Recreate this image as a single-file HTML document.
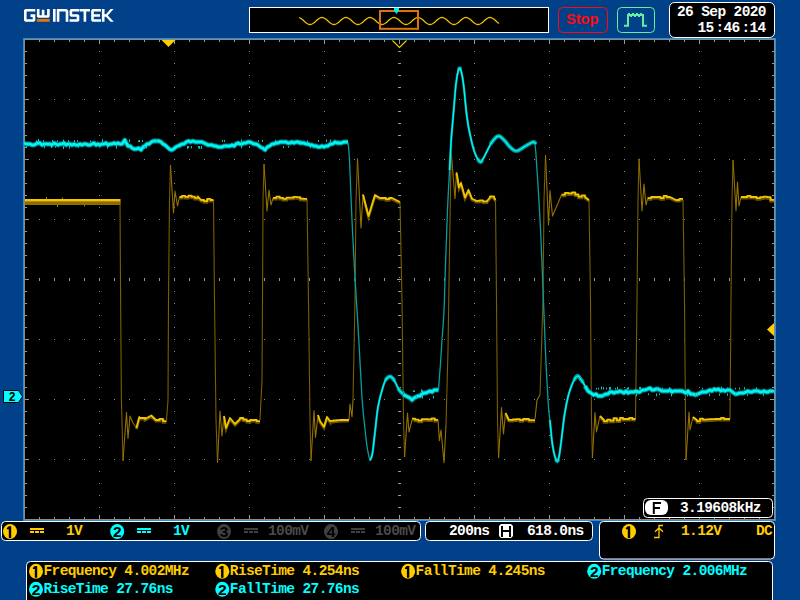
<!DOCTYPE html><html><head><meta charset="utf-8"><style>html,body{margin:0;padding:0;background:#01418a;width:800px;height:600px;overflow:hidden}svg{display:block}text{font-family:"Liberation Mono",monospace;font-weight:bold}</style></head><body>
<svg width="800" height="600" viewBox="0 0 800 600">
<rect width="800" height="600" fill="#01418a"/>
<rect x="23" y="38" width="753" height="483" fill="#2e8fd0"/>
<rect x="24" y="39" width="751" height="481" fill="#8a8a8a"/>
<rect x="25" y="40" width="749" height="479" fill="#000"/>
<path d="M99 51h1v1h-1zM99 63h1v1h-1zM99 75h1v1h-1zM99 87h1v1h-1zM99 99h1v1h-1zM99 111h1v1h-1zM99 123h1v1h-1zM99 135h1v1h-1zM99 147h1v1h-1zM99 159h1v1h-1zM99 171h1v1h-1zM99 183h1v1h-1zM99 195h1v1h-1zM99 207h1v1h-1zM99 219h1v1h-1zM99 231h1v1h-1zM99 243h1v1h-1zM99 255h1v1h-1zM99 267h1v1h-1zM99 279h1v1h-1zM99 291h1v1h-1zM99 303h1v1h-1zM99 315h1v1h-1zM99 327h1v1h-1zM99 339h1v1h-1zM99 351h1v1h-1zM99 363h1v1h-1zM99 375h1v1h-1zM99 387h1v1h-1zM99 399h1v1h-1zM99 411h1v1h-1zM99 423h1v1h-1zM99 435h1v1h-1zM99 447h1v1h-1zM99 459h1v1h-1zM99 471h1v1h-1zM99 483h1v1h-1zM99 495h1v1h-1zM99 507h1v1h-1zM174 51h1v1h-1zM174 63h1v1h-1zM174 75h1v1h-1zM174 87h1v1h-1zM174 99h1v1h-1zM174 111h1v1h-1zM174 123h1v1h-1zM174 135h1v1h-1zM174 147h1v1h-1zM174 159h1v1h-1zM174 171h1v1h-1zM174 183h1v1h-1zM174 195h1v1h-1zM174 207h1v1h-1zM174 219h1v1h-1zM174 231h1v1h-1zM174 243h1v1h-1zM174 255h1v1h-1zM174 267h1v1h-1zM174 279h1v1h-1zM174 291h1v1h-1zM174 303h1v1h-1zM174 315h1v1h-1zM174 327h1v1h-1zM174 339h1v1h-1zM174 351h1v1h-1zM174 363h1v1h-1zM174 375h1v1h-1zM174 387h1v1h-1zM174 399h1v1h-1zM174 411h1v1h-1zM174 423h1v1h-1zM174 435h1v1h-1zM174 447h1v1h-1zM174 459h1v1h-1zM174 471h1v1h-1zM174 483h1v1h-1zM174 495h1v1h-1zM174 507h1v1h-1zM249 51h1v1h-1zM249 63h1v1h-1zM249 75h1v1h-1zM249 87h1v1h-1zM249 99h1v1h-1zM249 111h1v1h-1zM249 123h1v1h-1zM249 135h1v1h-1zM249 147h1v1h-1zM249 159h1v1h-1zM249 171h1v1h-1zM249 183h1v1h-1zM249 195h1v1h-1zM249 207h1v1h-1zM249 219h1v1h-1zM249 231h1v1h-1zM249 243h1v1h-1zM249 255h1v1h-1zM249 267h1v1h-1zM249 279h1v1h-1zM249 291h1v1h-1zM249 303h1v1h-1zM249 315h1v1h-1zM249 327h1v1h-1zM249 339h1v1h-1zM249 351h1v1h-1zM249 363h1v1h-1zM249 375h1v1h-1zM249 387h1v1h-1zM249 399h1v1h-1zM249 411h1v1h-1zM249 423h1v1h-1zM249 435h1v1h-1zM249 447h1v1h-1zM249 459h1v1h-1zM249 471h1v1h-1zM249 483h1v1h-1zM249 495h1v1h-1zM249 507h1v1h-1zM324 51h1v1h-1zM324 63h1v1h-1zM324 75h1v1h-1zM324 87h1v1h-1zM324 99h1v1h-1zM324 111h1v1h-1zM324 123h1v1h-1zM324 135h1v1h-1zM324 147h1v1h-1zM324 159h1v1h-1zM324 171h1v1h-1zM324 183h1v1h-1zM324 195h1v1h-1zM324 207h1v1h-1zM324 219h1v1h-1zM324 231h1v1h-1zM324 243h1v1h-1zM324 255h1v1h-1zM324 267h1v1h-1zM324 279h1v1h-1zM324 291h1v1h-1zM324 303h1v1h-1zM324 315h1v1h-1zM324 327h1v1h-1zM324 339h1v1h-1zM324 351h1v1h-1zM324 363h1v1h-1zM324 375h1v1h-1zM324 387h1v1h-1zM324 399h1v1h-1zM324 411h1v1h-1zM324 423h1v1h-1zM324 435h1v1h-1zM324 447h1v1h-1zM324 459h1v1h-1zM324 471h1v1h-1zM324 483h1v1h-1zM324 495h1v1h-1zM324 507h1v1h-1zM474 51h1v1h-1zM474 63h1v1h-1zM474 75h1v1h-1zM474 87h1v1h-1zM474 99h1v1h-1zM474 111h1v1h-1zM474 123h1v1h-1zM474 135h1v1h-1zM474 147h1v1h-1zM474 159h1v1h-1zM474 171h1v1h-1zM474 183h1v1h-1zM474 195h1v1h-1zM474 207h1v1h-1zM474 219h1v1h-1zM474 231h1v1h-1zM474 243h1v1h-1zM474 255h1v1h-1zM474 267h1v1h-1zM474 279h1v1h-1zM474 291h1v1h-1zM474 303h1v1h-1zM474 315h1v1h-1zM474 327h1v1h-1zM474 339h1v1h-1zM474 351h1v1h-1zM474 363h1v1h-1zM474 375h1v1h-1zM474 387h1v1h-1zM474 399h1v1h-1zM474 411h1v1h-1zM474 423h1v1h-1zM474 435h1v1h-1zM474 447h1v1h-1zM474 459h1v1h-1zM474 471h1v1h-1zM474 483h1v1h-1zM474 495h1v1h-1zM474 507h1v1h-1zM549 51h1v1h-1zM549 63h1v1h-1zM549 75h1v1h-1zM549 87h1v1h-1zM549 99h1v1h-1zM549 111h1v1h-1zM549 123h1v1h-1zM549 135h1v1h-1zM549 147h1v1h-1zM549 159h1v1h-1zM549 171h1v1h-1zM549 183h1v1h-1zM549 195h1v1h-1zM549 207h1v1h-1zM549 219h1v1h-1zM549 231h1v1h-1zM549 243h1v1h-1zM549 255h1v1h-1zM549 267h1v1h-1zM549 279h1v1h-1zM549 291h1v1h-1zM549 303h1v1h-1zM549 315h1v1h-1zM549 327h1v1h-1zM549 339h1v1h-1zM549 351h1v1h-1zM549 363h1v1h-1zM549 375h1v1h-1zM549 387h1v1h-1zM549 399h1v1h-1zM549 411h1v1h-1zM549 423h1v1h-1zM549 435h1v1h-1zM549 447h1v1h-1zM549 459h1v1h-1zM549 471h1v1h-1zM549 483h1v1h-1zM549 495h1v1h-1zM549 507h1v1h-1zM624 51h1v1h-1zM624 63h1v1h-1zM624 75h1v1h-1zM624 87h1v1h-1zM624 99h1v1h-1zM624 111h1v1h-1zM624 123h1v1h-1zM624 135h1v1h-1zM624 147h1v1h-1zM624 159h1v1h-1zM624 171h1v1h-1zM624 183h1v1h-1zM624 195h1v1h-1zM624 207h1v1h-1zM624 219h1v1h-1zM624 231h1v1h-1zM624 243h1v1h-1zM624 255h1v1h-1zM624 267h1v1h-1zM624 279h1v1h-1zM624 291h1v1h-1zM624 303h1v1h-1zM624 315h1v1h-1zM624 327h1v1h-1zM624 339h1v1h-1zM624 351h1v1h-1zM624 363h1v1h-1zM624 375h1v1h-1zM624 387h1v1h-1zM624 399h1v1h-1zM624 411h1v1h-1zM624 423h1v1h-1zM624 435h1v1h-1zM624 447h1v1h-1zM624 459h1v1h-1zM624 471h1v1h-1zM624 483h1v1h-1zM624 495h1v1h-1zM624 507h1v1h-1zM699 51h1v1h-1zM699 63h1v1h-1zM699 75h1v1h-1zM699 87h1v1h-1zM699 99h1v1h-1zM699 111h1v1h-1zM699 123h1v1h-1zM699 135h1v1h-1zM699 147h1v1h-1zM699 159h1v1h-1zM699 171h1v1h-1zM699 183h1v1h-1zM699 195h1v1h-1zM699 207h1v1h-1zM699 219h1v1h-1zM699 231h1v1h-1zM699 243h1v1h-1zM699 255h1v1h-1zM699 267h1v1h-1zM699 279h1v1h-1zM699 291h1v1h-1zM699 303h1v1h-1zM699 315h1v1h-1zM699 327h1v1h-1zM699 339h1v1h-1zM699 351h1v1h-1zM699 363h1v1h-1zM699 375h1v1h-1zM699 387h1v1h-1zM699 399h1v1h-1zM699 411h1v1h-1zM699 423h1v1h-1zM699 435h1v1h-1zM699 447h1v1h-1zM699 459h1v1h-1zM699 471h1v1h-1zM699 483h1v1h-1zM699 495h1v1h-1zM699 507h1v1h-1zM39 99h1v1h-1zM54 99h1v1h-1zM69 99h1v1h-1zM84 99h1v1h-1zM114 99h1v1h-1zM129 99h1v1h-1zM144 99h1v1h-1zM159 99h1v1h-1zM189 99h1v1h-1zM204 99h1v1h-1zM219 99h1v1h-1zM234 99h1v1h-1zM264 99h1v1h-1zM279 99h1v1h-1zM294 99h1v1h-1zM309 99h1v1h-1zM339 99h1v1h-1zM354 99h1v1h-1zM369 99h1v1h-1zM384 99h1v1h-1zM414 99h1v1h-1zM429 99h1v1h-1zM444 99h1v1h-1zM459 99h1v1h-1zM489 99h1v1h-1zM504 99h1v1h-1zM519 99h1v1h-1zM534 99h1v1h-1zM564 99h1v1h-1zM579 99h1v1h-1zM594 99h1v1h-1zM609 99h1v1h-1zM639 99h1v1h-1zM654 99h1v1h-1zM669 99h1v1h-1zM684 99h1v1h-1zM714 99h1v1h-1zM729 99h1v1h-1zM744 99h1v1h-1zM759 99h1v1h-1zM39 159h1v1h-1zM54 159h1v1h-1zM69 159h1v1h-1zM84 159h1v1h-1zM114 159h1v1h-1zM129 159h1v1h-1zM144 159h1v1h-1zM159 159h1v1h-1zM189 159h1v1h-1zM204 159h1v1h-1zM219 159h1v1h-1zM234 159h1v1h-1zM264 159h1v1h-1zM279 159h1v1h-1zM294 159h1v1h-1zM309 159h1v1h-1zM339 159h1v1h-1zM354 159h1v1h-1zM369 159h1v1h-1zM384 159h1v1h-1zM414 159h1v1h-1zM429 159h1v1h-1zM444 159h1v1h-1zM459 159h1v1h-1zM489 159h1v1h-1zM504 159h1v1h-1zM519 159h1v1h-1zM534 159h1v1h-1zM564 159h1v1h-1zM579 159h1v1h-1zM594 159h1v1h-1zM609 159h1v1h-1zM639 159h1v1h-1zM654 159h1v1h-1zM669 159h1v1h-1zM684 159h1v1h-1zM714 159h1v1h-1zM729 159h1v1h-1zM744 159h1v1h-1zM759 159h1v1h-1zM39 219h1v1h-1zM54 219h1v1h-1zM69 219h1v1h-1zM84 219h1v1h-1zM114 219h1v1h-1zM129 219h1v1h-1zM144 219h1v1h-1zM159 219h1v1h-1zM189 219h1v1h-1zM204 219h1v1h-1zM219 219h1v1h-1zM234 219h1v1h-1zM264 219h1v1h-1zM279 219h1v1h-1zM294 219h1v1h-1zM309 219h1v1h-1zM339 219h1v1h-1zM354 219h1v1h-1zM369 219h1v1h-1zM384 219h1v1h-1zM414 219h1v1h-1zM429 219h1v1h-1zM444 219h1v1h-1zM459 219h1v1h-1zM489 219h1v1h-1zM504 219h1v1h-1zM519 219h1v1h-1zM534 219h1v1h-1zM564 219h1v1h-1zM579 219h1v1h-1zM594 219h1v1h-1zM609 219h1v1h-1zM639 219h1v1h-1zM654 219h1v1h-1zM669 219h1v1h-1zM684 219h1v1h-1zM714 219h1v1h-1zM729 219h1v1h-1zM744 219h1v1h-1zM759 219h1v1h-1zM39 339h1v1h-1zM54 339h1v1h-1zM69 339h1v1h-1zM84 339h1v1h-1zM114 339h1v1h-1zM129 339h1v1h-1zM144 339h1v1h-1zM159 339h1v1h-1zM189 339h1v1h-1zM204 339h1v1h-1zM219 339h1v1h-1zM234 339h1v1h-1zM264 339h1v1h-1zM279 339h1v1h-1zM294 339h1v1h-1zM309 339h1v1h-1zM339 339h1v1h-1zM354 339h1v1h-1zM369 339h1v1h-1zM384 339h1v1h-1zM414 339h1v1h-1zM429 339h1v1h-1zM444 339h1v1h-1zM459 339h1v1h-1zM489 339h1v1h-1zM504 339h1v1h-1zM519 339h1v1h-1zM534 339h1v1h-1zM564 339h1v1h-1zM579 339h1v1h-1zM594 339h1v1h-1zM609 339h1v1h-1zM639 339h1v1h-1zM654 339h1v1h-1zM669 339h1v1h-1zM684 339h1v1h-1zM714 339h1v1h-1zM729 339h1v1h-1zM744 339h1v1h-1zM759 339h1v1h-1zM39 399h1v1h-1zM54 399h1v1h-1zM69 399h1v1h-1zM84 399h1v1h-1zM114 399h1v1h-1zM129 399h1v1h-1zM144 399h1v1h-1zM159 399h1v1h-1zM189 399h1v1h-1zM204 399h1v1h-1zM219 399h1v1h-1zM234 399h1v1h-1zM264 399h1v1h-1zM279 399h1v1h-1zM294 399h1v1h-1zM309 399h1v1h-1zM339 399h1v1h-1zM354 399h1v1h-1zM369 399h1v1h-1zM384 399h1v1h-1zM414 399h1v1h-1zM429 399h1v1h-1zM444 399h1v1h-1zM459 399h1v1h-1zM489 399h1v1h-1zM504 399h1v1h-1zM519 399h1v1h-1zM534 399h1v1h-1zM564 399h1v1h-1zM579 399h1v1h-1zM594 399h1v1h-1zM609 399h1v1h-1zM639 399h1v1h-1zM654 399h1v1h-1zM669 399h1v1h-1zM684 399h1v1h-1zM714 399h1v1h-1zM729 399h1v1h-1zM744 399h1v1h-1zM759 399h1v1h-1zM39 459h1v1h-1zM54 459h1v1h-1zM69 459h1v1h-1zM84 459h1v1h-1zM114 459h1v1h-1zM129 459h1v1h-1zM144 459h1v1h-1zM159 459h1v1h-1zM189 459h1v1h-1zM204 459h1v1h-1zM219 459h1v1h-1zM234 459h1v1h-1zM264 459h1v1h-1zM279 459h1v1h-1zM294 459h1v1h-1zM309 459h1v1h-1zM339 459h1v1h-1zM354 459h1v1h-1zM369 459h1v1h-1zM384 459h1v1h-1zM414 459h1v1h-1zM429 459h1v1h-1zM444 459h1v1h-1zM459 459h1v1h-1zM489 459h1v1h-1zM504 459h1v1h-1zM519 459h1v1h-1zM534 459h1v1h-1zM564 459h1v1h-1zM579 459h1v1h-1zM594 459h1v1h-1zM609 459h1v1h-1zM639 459h1v1h-1zM654 459h1v1h-1zM669 459h1v1h-1zM684 459h1v1h-1zM714 459h1v1h-1zM729 459h1v1h-1zM744 459h1v1h-1zM759 459h1v1h-1z" fill="#8c8c8c"/>
<path d="M398 51h3v1h-3zM398 63h3v1h-3zM398 75h3v1h-3zM398 87h3v1h-3zM398 99h3v1h-3zM398 111h3v1h-3zM398 123h3v1h-3zM398 135h3v1h-3zM398 147h3v1h-3zM398 159h3v1h-3zM398 171h3v1h-3zM398 183h3v1h-3zM398 195h3v1h-3zM398 207h3v1h-3zM398 219h3v1h-3zM398 231h3v1h-3zM398 243h3v1h-3zM398 255h3v1h-3zM398 267h3v1h-3zM398 279h3v1h-3zM398 291h3v1h-3zM398 303h3v1h-3zM398 315h3v1h-3zM398 327h3v1h-3zM398 339h3v1h-3zM398 351h3v1h-3zM398 363h3v1h-3zM398 375h3v1h-3zM398 387h3v1h-3zM398 399h3v1h-3zM398 411h3v1h-3zM398 423h3v1h-3zM398 435h3v1h-3zM398 447h3v1h-3zM398 459h3v1h-3zM398 471h3v1h-3zM398 483h3v1h-3zM398 495h3v1h-3zM398 507h3v1h-3zM39 278v3h1v-3zM54 278v3h1v-3zM69 278v3h1v-3zM84 278v3h1v-3zM99 278v3h1v-3zM114 278v3h1v-3zM129 278v3h1v-3zM144 278v3h1v-3zM159 278v3h1v-3zM174 278v3h1v-3zM189 278v3h1v-3zM204 278v3h1v-3zM219 278v3h1v-3zM234 278v3h1v-3zM249 278v3h1v-3zM264 278v3h1v-3zM279 278v3h1v-3zM294 278v3h1v-3zM309 278v3h1v-3zM324 278v3h1v-3zM339 278v3h1v-3zM354 278v3h1v-3zM369 278v3h1v-3zM384 278v3h1v-3zM399 278v3h1v-3zM414 278v3h1v-3zM429 278v3h1v-3zM444 278v3h1v-3zM459 278v3h1v-3zM474 278v3h1v-3zM489 278v3h1v-3zM504 278v3h1v-3zM519 278v3h1v-3zM534 278v3h1v-3zM549 278v3h1v-3zM564 278v3h1v-3zM579 278v3h1v-3zM594 278v3h1v-3zM609 278v3h1v-3zM624 278v3h1v-3zM639 278v3h1v-3zM654 278v3h1v-3zM669 278v3h1v-3zM684 278v3h1v-3zM699 278v3h1v-3zM714 278v3h1v-3zM729 278v3h1v-3zM744 278v3h1v-3zM759 278v3h1v-3zM39 40h1v2h-1zM39 517h1v2h-1zM54 40h1v2h-1zM54 517h1v2h-1zM69 40h1v2h-1zM69 517h1v2h-1zM84 40h1v2h-1zM84 517h1v2h-1zM99 40h1v4h-1zM99 515h1v4h-1zM114 40h1v2h-1zM114 517h1v2h-1zM129 40h1v2h-1zM129 517h1v2h-1zM144 40h1v2h-1zM144 517h1v2h-1zM159 40h1v2h-1zM159 517h1v2h-1zM174 40h1v4h-1zM174 515h1v4h-1zM189 40h1v2h-1zM189 517h1v2h-1zM204 40h1v2h-1zM204 517h1v2h-1zM219 40h1v2h-1zM219 517h1v2h-1zM234 40h1v2h-1zM234 517h1v2h-1zM249 40h1v4h-1zM249 515h1v4h-1zM264 40h1v2h-1zM264 517h1v2h-1zM279 40h1v2h-1zM279 517h1v2h-1zM294 40h1v2h-1zM294 517h1v2h-1zM309 40h1v2h-1zM309 517h1v2h-1zM324 40h1v4h-1zM324 515h1v4h-1zM339 40h1v2h-1zM339 517h1v2h-1zM354 40h1v2h-1zM354 517h1v2h-1zM369 40h1v2h-1zM369 517h1v2h-1zM384 40h1v2h-1zM384 517h1v2h-1zM399 40h1v4h-1zM399 515h1v4h-1zM414 40h1v2h-1zM414 517h1v2h-1zM429 40h1v2h-1zM429 517h1v2h-1zM444 40h1v2h-1zM444 517h1v2h-1zM459 40h1v2h-1zM459 517h1v2h-1zM474 40h1v4h-1zM474 515h1v4h-1zM489 40h1v2h-1zM489 517h1v2h-1zM504 40h1v2h-1zM504 517h1v2h-1zM519 40h1v2h-1zM519 517h1v2h-1zM534 40h1v2h-1zM534 517h1v2h-1zM549 40h1v4h-1zM549 515h1v4h-1zM564 40h1v2h-1zM564 517h1v2h-1zM579 40h1v2h-1zM579 517h1v2h-1zM594 40h1v2h-1zM594 517h1v2h-1zM609 40h1v2h-1zM609 517h1v2h-1zM624 40h1v4h-1zM624 515h1v4h-1zM639 40h1v2h-1zM639 517h1v2h-1zM654 40h1v2h-1zM654 517h1v2h-1zM669 40h1v2h-1zM669 517h1v2h-1zM684 40h1v2h-1zM684 517h1v2h-1zM699 40h1v4h-1zM699 515h1v4h-1zM714 40h1v2h-1zM714 517h1v2h-1zM729 40h1v2h-1zM729 517h1v2h-1zM744 40h1v2h-1zM744 517h1v2h-1zM759 40h1v2h-1zM759 517h1v2h-1zM25 51h2v1h-2zM772 51h2v1h-2zM25 63h2v1h-2zM772 63h2v1h-2zM25 75h2v1h-2zM772 75h2v1h-2zM25 87h2v1h-2zM772 87h2v1h-2zM25 99h4v1h-4zM770 99h4v1h-4zM25 111h2v1h-2zM772 111h2v1h-2zM25 123h2v1h-2zM772 123h2v1h-2zM25 135h2v1h-2zM772 135h2v1h-2zM25 147h2v1h-2zM772 147h2v1h-2zM25 159h4v1h-4zM770 159h4v1h-4zM25 171h2v1h-2zM772 171h2v1h-2zM25 183h2v1h-2zM772 183h2v1h-2zM25 195h2v1h-2zM772 195h2v1h-2zM25 207h2v1h-2zM772 207h2v1h-2zM25 219h4v1h-4zM770 219h4v1h-4zM25 231h2v1h-2zM772 231h2v1h-2zM25 243h2v1h-2zM772 243h2v1h-2zM25 255h2v1h-2zM772 255h2v1h-2zM25 267h2v1h-2zM772 267h2v1h-2zM25 279h4v1h-4zM770 279h4v1h-4zM25 291h2v1h-2zM772 291h2v1h-2zM25 303h2v1h-2zM772 303h2v1h-2zM25 315h2v1h-2zM772 315h2v1h-2zM25 327h2v1h-2zM772 327h2v1h-2zM25 339h4v1h-4zM770 339h4v1h-4zM25 351h2v1h-2zM772 351h2v1h-2zM25 363h2v1h-2zM772 363h2v1h-2zM25 375h2v1h-2zM772 375h2v1h-2zM25 387h2v1h-2zM772 387h2v1h-2zM25 399h4v1h-4zM770 399h4v1h-4zM25 411h2v1h-2zM772 411h2v1h-2zM25 423h2v1h-2zM772 423h2v1h-2zM25 435h2v1h-2zM772 435h2v1h-2zM25 447h2v1h-2zM772 447h2v1h-2zM25 459h4v1h-4zM770 459h4v1h-4zM25 471h2v1h-2zM772 471h2v1h-2zM25 483h2v1h-2zM772 483h2v1h-2zM25 495h2v1h-2zM772 495h2v1h-2zM25 507h2v1h-2zM772 507h2v1h-2zM397 279h5v1h-5z M399 277h1v5h-1z" fill="#9a9a9a"/>
<polyline points="120.0,201.5 120.6,300.0 121.4,400.0 123.0,461.0" stroke="#7a5e00" stroke-width="1.1" fill="none"/>
<polyline points="123.0,461.0 126.5,412.5 128.0,438.5 130.0,416.0 133.0,423.0 136.5,428.0" stroke="#947200" stroke-width="1.1" fill="none" stroke-linejoin="round"/>
<polyline points="166.5,420.0 168.0,400.0 168.5,300.0 169.5,200.0 170.5,165.0" stroke="#7a5e00" stroke-width="1.1" fill="none"/>
<polyline points="170.5,165.0 173.5,213.0 175.0,191.0 177.5,206.0 179.5,197.0" stroke="#947200" stroke-width="1.1" fill="none" stroke-linejoin="round"/>
<polyline points="213.5,200.0 214.5,300.0 216.0,420.0 217.5,462.5" stroke="#7a5e00" stroke-width="1.1" fill="none"/>
<polyline points="217.5,462.5 220.0,411.0 222.0,436.0 224.0,416.0" stroke="#947200" stroke-width="1.1" fill="none" stroke-linejoin="round"/>
<polyline points="260.0,420.0 262.0,380.0 262.5,300.0 263.0,200.0 264.0,164.0" stroke="#7a5e00" stroke-width="1.1" fill="none"/>
<polyline points="264.0,164.0 267.0,211.0 269.0,190.0 271.0,205.0 273.0,198.0" stroke="#947200" stroke-width="1.1" fill="none" stroke-linejoin="round"/>
<polyline points="307.0,199.0 308.5,300.0 310.0,420.0 311.0,460.8" stroke="#7a5e00" stroke-width="1.1" fill="none"/>
<polyline points="311.0,460.8 314.0,410.8 315.5,437.5 318.0,415.0" stroke="#947200" stroke-width="1.1" fill="none" stroke-linejoin="round"/>
<polyline points="349.0,420.0 350.0,404.0 352.0,417.0 353.0,400.0" stroke="#947200" stroke-width="1.1" fill="none" stroke-linejoin="round"/>
<polyline points="353.0,400.0 355.0,300.0 356.0,200.0 357.5,158.5" stroke="#7a5e00" stroke-width="1.1" fill="none"/>
<polyline points="357.5,158.5 361.0,228.0 363.0,194.5" stroke="#947200" stroke-width="1.1" fill="none" stroke-linejoin="round"/>
<polyline points="400.0,202.0 402.0,300.0 403.5,420.0 404.6,457.0" stroke="#7a5e00" stroke-width="1.1" fill="none"/>
<polyline points="404.6,457.0 407.5,413.0 409.0,432.0 412.0,420.0" stroke="#947200" stroke-width="1.1" fill="none" stroke-linejoin="round"/>
<polyline points="438.0,420.0 439.4,440.6 441.0,430.0 444.0,462.6 446.0,425.0" stroke="#947200" stroke-width="1.1" fill="none" stroke-linejoin="round"/>
<polyline points="446.0,425.0 448.0,350.0 449.5,250.0 451.2,152.0" stroke="#7a5e00" stroke-width="1.1" fill="none"/>
<polyline points="451.2,152.0 455.0,198.8 456.5,172.5" stroke="#947200" stroke-width="1.1" fill="none" stroke-linejoin="round"/>
<polyline points="495.5,200.0 496.5,300.0 497.5,420.0 498.6,458.0" stroke="#7a5e00" stroke-width="1.1" fill="none"/>
<polyline points="498.6,458.0 501.5,407.6 503.5,434.0 505.5,413.0" stroke="#947200" stroke-width="1.1" fill="none" stroke-linejoin="round"/>
<polyline points="535.0,419.0 537.0,400.0 540.0,395.0" stroke="#947200" stroke-width="1.1" fill="none" stroke-linejoin="round"/>
<polyline points="540.0,395.0 543.0,300.0 544.0,200.0 545.5,155.0" stroke="#7a5e00" stroke-width="1.1" fill="none"/>
<polyline points="545.5,155.0 548.5,225.0 550.0,190.6 552.5,216.0 561.5,195.0" stroke="#947200" stroke-width="1.1" fill="none" stroke-linejoin="round"/>
<polyline points="589.0,200.0 590.5,300.0 591.5,420.0 592.4,458.0" stroke="#7a5e00" stroke-width="1.1" fill="none"/>
<polyline points="592.4,458.0 595.0,412.6 596.5,432.0 600.0,416.0" stroke="#947200" stroke-width="1.1" fill="none" stroke-linejoin="round"/>
<polyline points="635.5,419.0 637.0,300.0 638.0,200.0 639.0,158.8" stroke="#7a5e00" stroke-width="1.1" fill="none"/>
<polyline points="639.0,158.8 642.0,211.0 644.0,184.0 646.0,205.0 648.0,197.0" stroke="#947200" stroke-width="1.1" fill="none" stroke-linejoin="round"/>
<polyline points="683.0,200.0 684.5,300.0 685.5,420.0 686.0,460.0" stroke="#7a5e00" stroke-width="1.1" fill="none"/>
<polyline points="686.0,460.0 689.0,412.0 690.0,430.0 693.0,417.0" stroke="#947200" stroke-width="1.1" fill="none" stroke-linejoin="round"/>
<polyline points="730.0,419.0 731.0,300.0 732.0,200.0 733.0,160.0" stroke="#7a5e00" stroke-width="1.1" fill="none"/>
<polyline points="733.0,160.0 736.0,210.6 737.5,182.0 739.0,206.0 741.0,197.0" stroke="#947200" stroke-width="1.1" fill="none" stroke-linejoin="round"/>
<polyline points="136.5,429.3 139.3,418.3 139.3,419.3 145.0,419.3 145.0,420.3 151.3,416.8 151.3,416.8 156.0,421.3 156.0,421.3 159.5,421.3 159.5,420.1 163.0,420.1 163.0,422.5 166.5,422.5" stroke="#6a5400" stroke-width="2.6" fill="none"/>
<polyline points="136.5,428.0 139.3,417.0 139.3,418.0 145.0,418.0 145.0,419.0 151.3,415.5 151.3,415.5 156.0,420.0 156.0,420.0 159.5,420.0 159.5,418.8 163.0,418.8 163.0,421.2 166.5,421.2" stroke="#f4c400" stroke-width="1.8" fill="none" stroke-linejoin="round"/>
<polyline points="179.5,198.3 182.0,198.3 182.0,197.1 185.2,197.1 185.2,198.2 188.4,198.2 188.4,196.9 191.6,196.9 191.6,198.0 194.8,198.0 194.8,199.1 198.0,199.1 198.0,197.8 201.0,201.3 201.0,201.3 204.1,201.3 204.1,202.5 207.2,202.5 207.2,200.1 210.4,200.1 210.4,201.3 213.5,201.3" stroke="#6a5400" stroke-width="2.6" fill="none"/>
<polyline points="179.5,197.0 182.0,197.0 182.0,195.8 185.2,195.8 185.2,196.8 188.4,196.8 188.4,195.6 191.6,195.6 191.6,196.7 194.8,196.7 194.8,197.8 198.0,197.8 198.0,196.5 201.0,200.0 201.0,200.0 204.1,200.0 204.1,201.2 207.2,201.2 207.2,198.8 210.4,198.8 210.4,200.0 213.5,200.0" stroke="#f4c400" stroke-width="1.8" fill="none" stroke-linejoin="round"/>
<polyline points="224.0,417.3 226.0,429.3 226.0,429.3 230.0,419.3 230.0,419.3 235.0,425.3 235.0,425.3 240.0,420.3 240.0,419.3 243.3,419.3 243.3,420.8 246.7,420.8 246.7,422.3 250.0,422.3 250.0,421.3 253.3,421.3 253.3,421.3 256.7,421.3 256.7,422.5 260.0,422.5" stroke="#6a5400" stroke-width="2.6" fill="none"/>
<polyline points="224.0,416.0 226.0,428.0 226.0,428.0 230.0,418.0 230.0,418.0 235.0,424.0 235.0,424.0 240.0,419.0 240.0,418.0 243.3,418.0 243.3,419.5 246.7,419.5 246.7,421.0 250.0,421.0 250.0,420.0 253.3,420.0 253.3,420.0 256.7,420.0 256.7,421.2 260.0,421.2" stroke="#f4c400" stroke-width="1.8" fill="none" stroke-linejoin="round"/>
<polyline points="273.0,199.2 276.4,199.2 276.4,198.0 279.8,198.0 279.8,199.1 283.2,199.1 283.2,200.2 286.6,200.2 286.6,198.9 290.0,198.9 290.0,199.0 293.4,199.0 293.4,198.1 296.8,198.1 296.8,198.4 300.2,198.4 300.2,199.9 303.6,199.9 303.6,200.2 307.0,200.2" stroke="#6a5400" stroke-width="2.6" fill="none"/>
<polyline points="273.0,197.9 276.4,197.9 276.4,196.7 279.8,196.7 279.8,197.8 283.2,197.8 283.2,198.8 286.6,198.8 286.6,197.6 290.0,197.6 290.0,197.7 293.4,197.7 293.4,196.8 296.8,196.8 296.8,197.1 300.2,197.1 300.2,198.6 303.6,198.6 303.6,198.8 307.0,198.8" stroke="#f4c400" stroke-width="1.8" fill="none" stroke-linejoin="round"/>
<polyline points="318.0,416.3 320.0,422.3 320.0,422.3 324.0,428.0 324.0,428.0 327.0,418.3 327.0,418.3 330.0,422.3 330.0,422.1 333.3,422.1 333.3,421.8 336.7,421.8 336.7,421.5 340.0,421.5 340.0,421.3 343.0,421.3 343.0,421.3 346.0,421.3 346.0,421.3 349.0,421.3" stroke="#6a5400" stroke-width="2.6" fill="none"/>
<polyline points="318.0,415.0 320.0,421.0 320.0,421.0 324.0,426.7 324.0,426.7 327.0,417.0 327.0,417.0 330.0,421.0 330.0,420.8 333.3,420.8 333.3,420.5 336.7,420.5 336.7,420.2 340.0,420.2 340.0,420.0 343.0,420.0 343.0,420.0 346.0,420.0 346.0,420.0 349.0,420.0" stroke="#f4c400" stroke-width="1.8" fill="none" stroke-linejoin="round"/>
<polyline points="363.0,195.8 368.5,217.3 368.5,217.3 375.0,196.3 375.0,196.3 380.0,199.3 380.0,199.3 383.0,199.3 383.0,199.3 386.0,199.3 386.0,200.5 389.0,200.5 389.0,199.3 392.0,199.3 392.0,199.3 400.0,203.3" stroke="#6a5400" stroke-width="2.6" fill="none"/>
<polyline points="363.0,194.5 368.5,216.0 368.5,216.0 375.0,195.0 375.0,195.0 380.0,198.0 380.0,198.0 383.0,198.0 383.0,198.0 386.0,198.0 386.0,199.2 389.0,199.2 389.0,198.0 392.0,198.0 392.0,198.0 400.0,202.0" stroke="#f4c400" stroke-width="1.8" fill="none" stroke-linejoin="round"/>
<polyline points="412.0,420.0 415.2,420.0 415.2,420.9 418.5,420.9 418.5,421.9 421.8,421.9 421.8,420.4 425.0,420.4 425.0,420.4 428.2,420.4 428.2,420.7 431.5,420.7 431.5,419.7 434.8,419.7 434.8,421.2 438.0,421.2" stroke="#6a5400" stroke-width="2.6" fill="none"/>
<polyline points="412.0,418.7 415.2,418.7 415.2,419.6 418.5,419.6 418.5,420.6 421.8,420.6 421.8,419.1 425.0,419.1 425.0,419.1 428.2,419.1 428.2,419.4 431.5,419.4 431.5,418.4 434.8,418.4 434.8,419.9 438.0,419.9" stroke="#f4c400" stroke-width="1.8" fill="none" stroke-linejoin="round"/>
<polyline points="456.5,173.8 459.0,188.8 459.0,188.8 461.0,184.3 461.0,184.3 465.0,198.8 465.0,198.8 468.5,191.3 468.5,191.3 472.0,200.1 472.0,200.1 476.0,201.9 476.0,202.2 479.5,202.2 479.5,201.7 483.0,201.7 483.0,202.8 487.0,202.8 487.0,202.3 490.0,198.8 490.0,197.6 494.0,197.6 494.0,198.8 495.5,201.3" stroke="#6a5400" stroke-width="2.6" fill="none"/>
<polyline points="456.5,172.5 459.0,187.5 459.0,187.5 461.0,183.0 461.0,183.0 465.0,197.5 465.0,197.5 468.5,190.0 468.5,190.0 472.0,198.8 472.0,198.8 476.0,200.6 476.0,200.9 479.5,200.9 479.5,200.4 483.0,200.4 483.0,201.4 487.0,201.4 487.0,201.0 490.0,197.5 490.0,196.3 494.0,196.3 494.0,197.5 495.5,200.0" stroke="#f4c400" stroke-width="1.8" fill="none" stroke-linejoin="round"/>
<polyline points="505.5,414.3 509.0,421.3 509.0,421.1 512.7,421.1 512.7,420.8 516.3,420.8 516.3,420.5 520.0,420.5 520.0,421.5 523.0,421.5 523.0,420.3 526.0,420.3 526.0,420.3 529.0,420.3 529.0,421.5 532.0,421.5 532.0,421.5 535.0,421.5" stroke="#6a5400" stroke-width="2.6" fill="none"/>
<polyline points="505.5,413.0 509.0,420.0 509.0,419.8 512.7,419.8 512.7,419.5 516.3,419.5 516.3,419.2 520.0,419.2 520.0,420.2 523.0,420.2 523.0,419.0 526.0,419.0 526.0,419.0 529.0,419.0 529.0,420.2 532.0,420.2 532.0,420.2 535.0,420.2" stroke="#f4c400" stroke-width="1.8" fill="none" stroke-linejoin="round"/>
<polyline points="561.5,196.0 565.0,196.0 565.0,194.1 568.5,194.1 568.5,194.6 572.0,194.6 572.0,193.6 575.2,193.6 575.2,195.8 578.5,195.8 578.5,198.0 581.8,198.0 581.8,196.6 585.0,196.6 585.0,198.3 589.0,201.3" stroke="#6a5400" stroke-width="2.6" fill="none"/>
<polyline points="561.5,194.7 565.0,194.7 565.0,192.8 568.5,192.8 568.5,193.3 572.0,193.3 572.0,192.3 575.2,192.3 575.2,194.5 578.5,194.5 578.5,196.7 581.8,196.7 581.8,195.3 585.0,195.3 585.0,197.0 589.0,200.0" stroke="#f4c400" stroke-width="1.8" fill="none" stroke-linejoin="round"/>
<polyline points="600.0,417.3 604.0,421.3 604.0,422.4 607.2,422.4 607.2,421.0 610.4,421.0 610.4,422.0 613.6,422.0 613.6,419.4 616.8,419.4 616.8,421.6 620.0,421.6 620.0,419.1 623.1,419.1 623.1,420.3 626.2,420.3 626.2,420.3 629.3,420.3 629.3,419.1 632.4,419.1 632.4,420.3 635.5,420.3" stroke="#6a5400" stroke-width="2.6" fill="none"/>
<polyline points="600.0,416.0 604.0,420.0 604.0,421.1 607.2,421.1 607.2,419.7 610.4,419.7 610.4,420.7 613.6,420.7 613.6,418.1 616.8,418.1 616.8,420.3 620.0,420.3 620.0,417.8 623.1,417.8 623.1,419.0 626.2,419.0 626.2,419.0 629.3,419.0 629.3,417.8 632.4,417.8 632.4,419.0 635.5,419.0" stroke="#f4c400" stroke-width="1.8" fill="none" stroke-linejoin="round"/>
<polyline points="648.0,199.5 651.1,199.5 651.1,198.3 654.3,198.3 654.3,198.3 657.4,198.3 657.4,198.3 660.6,198.3 660.6,199.5 663.7,199.5 663.7,197.1 666.9,197.1 666.9,198.3 670.0,198.3 670.0,198.3 676.0,201.3 676.0,201.3 679.5,201.3 679.5,200.1 683.0,200.1" stroke="#6a5400" stroke-width="2.6" fill="none"/>
<polyline points="648.0,198.2 651.1,198.2 651.1,197.0 654.3,197.0 654.3,197.0 657.4,197.0 657.4,197.0 660.6,197.0 660.6,198.2 663.7,198.2 663.7,195.8 666.9,195.8 666.9,197.0 670.0,197.0 670.0,197.0 676.0,200.0 676.0,200.0 679.5,200.0 679.5,198.8 683.0,198.8" stroke="#f4c400" stroke-width="1.8" fill="none" stroke-linejoin="round"/>
<polyline points="693.0,418.3 697.0,421.3 697.0,422.4 700.0,422.4 700.0,419.9 703.0,419.9 703.0,420.9 706.0,420.9 706.0,420.7 709.0,420.7 709.0,420.6 712.0,420.6 712.0,420.4 715.0,420.4 715.0,420.3 718.0,420.3 718.0,420.3 721.0,420.3 721.0,419.1 724.0,419.1 724.0,420.3 727.0,420.3 727.0,420.3 730.0,420.3" stroke="#6a5400" stroke-width="2.6" fill="none"/>
<polyline points="693.0,417.0 697.0,420.0 697.0,421.1 700.0,421.1 700.0,418.6 703.0,418.6 703.0,419.6 706.0,419.6 706.0,419.4 709.0,419.4 709.0,419.2 712.0,419.2 712.0,419.1 715.0,419.1 715.0,419.0 718.0,419.0 718.0,419.0 721.0,419.0 721.0,417.8 724.0,417.8 724.0,419.0 727.0,419.0 727.0,419.0 730.0,419.0" stroke="#f4c400" stroke-width="1.8" fill="none" stroke-linejoin="round"/>
<polyline points="741.0,198.3 744.2,198.3 744.2,198.3 747.3,198.3 747.3,197.1 750.5,197.1 750.5,198.3 753.7,198.3 753.7,198.3 756.8,198.3 756.8,199.5 760.0,199.5 760.0,198.6 763.5,198.6 763.5,197.9 767.0,197.9 767.0,198.4 770.5,198.4 770.5,201.2 774.0,201.2" stroke="#6a5400" stroke-width="2.6" fill="none"/>
<polyline points="741.0,197.0 744.2,197.0 744.2,197.0 747.3,197.0 747.3,195.8 750.5,195.8 750.5,197.0 753.7,197.0 753.7,197.0 756.8,197.0 756.8,198.2 760.0,198.2 760.0,197.2 763.5,197.2 763.5,196.6 767.0,196.6 767.0,197.1 770.5,197.1 770.5,199.9 774.0,199.9" stroke="#f4c400" stroke-width="1.8" fill="none" stroke-linejoin="round"/>
<rect x="25" y="201.5" width="95.5" height="3.5" fill="#8a6e00"/>
<rect x="25" y="199" width="95.5" height="2.6" fill="#f4c400"/>
<path d="M46.5,199v-2 M62.5,199v-1.5 M84.5,205v1.5 M57.5,205v2" stroke="#a08000" stroke-width="1"/>
<polyline points="348.0,142.5 348.2,144.6 348.6,147.5 349.0,152.2 349.5,160.0 350.0,172.0 350.6,187.3 351.3,204.0 352.0,220.0 352.7,234.9 353.5,249.8 354.3,264.8 355.2,280.0 356.1,295.7 357.1,311.7 358.1,327.6 359.0,343.0 359.8,358.1 360.6,373.1 361.4,387.2 362.2,400.0 363.1,411.4 364.2,421.7 365.2,430.6 366.0,438.0 366.6,443.3 367.1,446.8 367.5,449.4 368.0,452.0 368.5,454.7 369.1,457.1 369.6,459.1 370.0,460.5" stroke="#0a9c9c" stroke-width="1.3" fill="none"/>
<polyline points="438.4,390.0 438.7,386.6 439.1,381.9 439.5,376.2 440.0,370.0 440.5,363.2 441.0,355.6 441.5,347.7 442.0,340.0 442.5,332.5 443.1,325.0 443.6,317.5 444.0,310.0 444.3,303.4 444.5,297.5 444.7,290.3 445.0,280.0 445.5,264.6 446.2,245.6 446.9,226.3 447.5,210.0 448.1,197.0 448.7,185.6 449.2,176.5 449.6,170.0" stroke="#0a9c9c" stroke-width="1.3" fill="none"/>
<polyline points="535.0,143.0 535.3,146.8 535.8,152.1 536.3,159.6 537.0,170.0 537.9,183.8 538.9,200.4 540.0,219.4 541.0,240.0 542.0,263.8 543.1,290.6 544.1,317.1 545.0,340.0 545.8,358.8 546.6,375.0 547.4,388.8 548.0,400.0 548.6,408.3 549.1,413.8 549.6,417.3 549.9,420.0" stroke="#0a9c9c" stroke-width="1.3" fill="none"/>
<polyline points="24.0,143.0 26.0,144.0 28.0,144.0 30.0,144.0 32.0,145.0 34.0,145.0 36.0,144.0 38.0,143.0 40.0,143.0 42.0,145.0 44.0,144.0 46.0,144.0 48.0,144.0 50.0,144.0 52.0,145.0 54.0,143.0 56.0,144.0 58.0,145.0 60.0,144.0 62.0,144.0 64.0,143.0 66.0,145.0 68.0,144.0 70.0,144.0 72.0,145.0 74.0,144.0 76.0,145.0 78.0,145.0 80.0,144.0 82.0,145.0 84.0,144.0 86.0,144.0 88.0,145.0 90.0,145.0 92.0,144.0 94.0,143.0 96.0,145.0 98.0,144.0 100.0,145.0 102.0,144.0 104.0,144.0 106.0,143.0 108.0,145.0 110.0,144.0 112.0,144.0 114.0,143.0 116.0,144.0 118.0,143.0 120.0,144.0 122.0,144.0 124.7,140.0 128.0,146.0 130.0,146.0 132.0,148.0 134.0,149.0 136.3,149.0 138.7,148.0 141.0,150.0 143.0,147.0 145.0,146.0 147.0,144.0 149.2,144.0 151.3,142.0 153.5,141.0 156.2,141.0 159.0,141.0 161.0,142.0 163.0,144.0 165.0,145.0 167.2,147.0 169.3,149.0 171.5,150.0 173.7,149.0 175.8,147.0 178.0,146.0 180.0,145.0 182.0,144.0 184.0,144.0 186.2,142.0 188.5,141.0 190.7,142.0 193.0,141.0 195.3,142.0 197.7,142.0 200.0,142.0 202.0,142.0 204.0,143.0 206.0,144.0 208.0,145.0 210.0,145.0 212.0,145.0 214.0,146.0 216.0,146.0 218.0,147.0 220.0,147.0 222.0,147.0 224.0,146.0 226.0,146.0 228.0,146.0 230.0,146.0 232.0,145.0 234.0,146.0 236.0,144.0 238.0,143.0 240.0,144.0 242.0,144.0 244.0,143.0 246.0,143.0 248.0,142.0 250.0,142.0 252.0,143.0 254.0,144.0 256.0,144.0 258.0,145.0 260.3,147.0 262.7,148.0 265.0,150.0 267.3,147.0 269.7,146.0 272.0,144.0 274.0,144.0 276.0,143.0 278.0,143.0 280.0,142.0 282.0,142.0 284.0,142.0 286.0,142.0 288.0,143.0 290.0,143.0 292.0,142.0 294.0,143.0 296.0,142.0 298.0,142.0 300.0,143.0 302.0,143.0 304.0,143.0 306.0,144.0 308.0,144.0 310.0,145.0 312.0,145.0 314.0,146.0 316.0,146.0 318.0,147.0 320.0,147.0 322.0,146.0 324.0,147.0 326.0,146.0 328.0,146.0 330.3,144.0 332.7,144.0 335.0,142.0 337.2,143.0 339.3,143.0 341.5,143.0 343.7,142.0 345.8,142.0 348.0,142.0" stroke="#007a7a" stroke-width="4.8" fill="none" stroke-linejoin="round"/>
<polyline points="24.0,143.0 26.0,144.0 28.0,144.0 30.0,144.0 32.0,145.0 34.0,145.0 36.0,144.0 38.0,143.0 40.0,143.0 42.0,145.0 44.0,144.0 46.0,144.0 48.0,144.0 50.0,144.0 52.0,145.0 54.0,143.0 56.0,144.0 58.0,145.0 60.0,144.0 62.0,144.0 64.0,143.0 66.0,145.0 68.0,144.0 70.0,144.0 72.0,145.0 74.0,144.0 76.0,145.0 78.0,145.0 80.0,144.0 82.0,145.0 84.0,144.0 86.0,144.0 88.0,145.0 90.0,145.0 92.0,144.0 94.0,143.0 96.0,145.0 98.0,144.0 100.0,145.0 102.0,144.0 104.0,144.0 106.0,143.0 108.0,145.0 110.0,144.0 112.0,144.0 114.0,143.0 116.0,144.0 118.0,143.0 120.0,144.0 122.0,144.0 124.7,140.0 128.0,146.0 130.0,146.0 132.0,148.0 134.0,149.0 136.3,149.0 138.7,148.0 141.0,150.0 143.0,147.0 145.0,146.0 147.0,144.0 149.2,144.0 151.3,142.0 153.5,141.0 156.2,141.0 159.0,141.0 161.0,142.0 163.0,144.0 165.0,145.0 167.2,147.0 169.3,149.0 171.5,150.0 173.7,149.0 175.8,147.0 178.0,146.0 180.0,145.0 182.0,144.0 184.0,144.0 186.2,142.0 188.5,141.0 190.7,142.0 193.0,141.0 195.3,142.0 197.7,142.0 200.0,142.0 202.0,142.0 204.0,143.0 206.0,144.0 208.0,145.0 210.0,145.0 212.0,145.0 214.0,146.0 216.0,146.0 218.0,147.0 220.0,147.0 222.0,147.0 224.0,146.0 226.0,146.0 228.0,146.0 230.0,146.0 232.0,145.0 234.0,146.0 236.0,144.0 238.0,143.0 240.0,144.0 242.0,144.0 244.0,143.0 246.0,143.0 248.0,142.0 250.0,142.0 252.0,143.0 254.0,144.0 256.0,144.0 258.0,145.0 260.3,147.0 262.7,148.0 265.0,150.0 267.3,147.0 269.7,146.0 272.0,144.0 274.0,144.0 276.0,143.0 278.0,143.0 280.0,142.0 282.0,142.0 284.0,142.0 286.0,142.0 288.0,143.0 290.0,143.0 292.0,142.0 294.0,143.0 296.0,142.0 298.0,142.0 300.0,143.0 302.0,143.0 304.0,143.0 306.0,144.0 308.0,144.0 310.0,145.0 312.0,145.0 314.0,146.0 316.0,146.0 318.0,147.0 320.0,147.0 322.0,146.0 324.0,147.0 326.0,146.0 328.0,146.0 330.3,144.0 332.7,144.0 335.0,142.0 337.2,143.0 339.3,143.0 341.5,143.0 343.7,142.0 345.8,142.0 348.0,142.0" stroke="#00f4f4" stroke-width="2.8" fill="none" stroke-linejoin="round"/>
<polyline points="585.0,386.0 588.0,391.0 591.0,393.0 593.5,395.0 596.0,394.0 598.0,396.0 600.0,396.0 602.0,396.0 604.0,395.0 606.0,394.0 608.0,394.0 610.0,392.0 612.0,392.0 614.0,393.0 616.0,392.0 618.0,392.0 620.0,391.0 622.0,392.0 624.0,393.0 626.0,391.0 628.0,393.0 630.0,392.0 632.0,392.0 634.0,392.0 636.0,391.0 638.0,392.0 640.0,392.0 642.5,390.0 645.0,390.0 647.5,389.0 650.0,388.0 652.0,390.0 654.0,390.0 656.0,389.0 658.0,389.0 660.0,390.0 662.0,391.0 664.0,391.0 666.0,391.0 668.0,391.0 670.0,390.0 672.0,392.0 674.0,391.0 676.0,391.0 678.0,391.0 680.0,391.0 682.0,391.0 684.0,392.0 686.0,393.0 688.0,391.0 690.5,394.0 693.0,394.0 695.3,395.0 697.7,394.0 700.0,393.0 702.0,392.0 704.0,392.0 706.0,392.0 708.0,391.0 710.0,390.0 712.0,391.0 714.2,389.0 716.3,390.0 718.5,389.0 720.7,391.0 722.8,390.0 725.0,391.0 727.5,390.0 730.0,390.0 732.5,392.0 735.0,394.0 737.1,394.0 739.3,393.0 741.4,393.0 743.6,393.0 745.7,392.0 747.9,391.0 750.0,392.0 752.0,392.0 754.0,391.0 756.0,391.0 758.0,391.0 760.0,392.0 762.0,392.0 764.0,391.0 766.0,392.0 768.0,392.0 770.0,391.0 772.0,391.0 774.0,391.5" stroke="#007a7a" stroke-width="4.8" fill="none" stroke-linejoin="round"/>
<polyline points="585.0,386.0 588.0,391.0 591.0,393.0 593.5,395.0 596.0,394.0 598.0,396.0 600.0,396.0 602.0,396.0 604.0,395.0 606.0,394.0 608.0,394.0 610.0,392.0 612.0,392.0 614.0,393.0 616.0,392.0 618.0,392.0 620.0,391.0 622.0,392.0 624.0,393.0 626.0,391.0 628.0,393.0 630.0,392.0 632.0,392.0 634.0,392.0 636.0,391.0 638.0,392.0 640.0,392.0 642.5,390.0 645.0,390.0 647.5,389.0 650.0,388.0 652.0,390.0 654.0,390.0 656.0,389.0 658.0,389.0 660.0,390.0 662.0,391.0 664.0,391.0 666.0,391.0 668.0,391.0 670.0,390.0 672.0,392.0 674.0,391.0 676.0,391.0 678.0,391.0 680.0,391.0 682.0,391.0 684.0,392.0 686.0,393.0 688.0,391.0 690.5,394.0 693.0,394.0 695.3,395.0 697.7,394.0 700.0,393.0 702.0,392.0 704.0,392.0 706.0,392.0 708.0,391.0 710.0,390.0 712.0,391.0 714.2,389.0 716.3,390.0 718.5,389.0 720.7,391.0 722.8,390.0 725.0,391.0 727.5,390.0 730.0,390.0 732.5,392.0 735.0,394.0 737.1,394.0 739.3,393.0 741.4,393.0 743.6,393.0 745.7,392.0 747.9,391.0 750.0,392.0 752.0,392.0 754.0,391.0 756.0,391.0 758.0,391.0 760.0,392.0 762.0,392.0 764.0,391.0 766.0,392.0 768.0,392.0 770.0,391.0 772.0,391.0 774.0,391.5" stroke="#00f4f4" stroke-width="2.8" fill="none" stroke-linejoin="round"/>
<polyline points="402.0,392.0 404.0,395.0 406.0,396.0 408.0,397.0 410.0,398.0 412.0,400.0 414.0,398.0 416.0,397.0 418.0,396.0 420.0,396.0 422.0,394.0 424.0,393.0 426.0,393.0 428.0,392.0 430.0,391.0 432.1,392.0 434.2,390.0 436.3,390.0 438.4,390.0" stroke="#007a7a" stroke-width="4.8" fill="none" stroke-linejoin="round"/>
<polyline points="402.0,392.0 404.0,395.0 406.0,396.0 408.0,397.0 410.0,398.0 412.0,400.0 414.0,398.0 416.0,397.0 418.0,396.0 420.0,396.0 422.0,394.0 424.0,393.0 426.0,393.0 428.0,392.0 430.0,391.0 432.1,392.0 434.2,390.0 436.3,390.0 438.4,390.0" stroke="#00f4f4" stroke-width="2.8" fill="none" stroke-linejoin="round"/>
<polyline points="386.0,379.5 386.6,378.6 387.3,377.9 388.0,377.3 388.6,376.9 389.3,376.7 390.0,376.6 390.7,376.7 391.3,377.1 392.0,377.6 392.6,378.2 393.3,379.0 394.0,380.0" stroke="#007a7a" stroke-width="4.2" fill="none" stroke-linejoin="round" stroke-linecap="round"/>
<polyline points="386.0,379.5 386.6,378.6 387.3,377.9 388.0,377.3 388.6,376.9 389.3,376.7 390.0,376.6 390.7,376.7 391.3,377.1 392.0,377.6 392.6,378.2 393.3,379.0 394.0,380.0" stroke="#00f4f4" stroke-width="2.6" fill="none" stroke-linejoin="round" stroke-linecap="round"/>
<polyline points="398.6,389.0 399.3,390.0 399.9,390.9 400.6,391.6 401.2,392.1 401.6,392.6 402.0,393.0" stroke="#007a7a" stroke-width="4.2" fill="none" stroke-linejoin="round" stroke-linecap="round"/>
<polyline points="398.6,389.0 399.3,390.0 399.9,390.9 400.6,391.6 401.2,392.1 401.6,392.6 402.0,393.0" stroke="#00f4f4" stroke-width="2.6" fill="none" stroke-linejoin="round" stroke-linecap="round"/>
<polyline points="370.0,460.5 370.3,459.8 370.6,459.1 371.1,458.1 371.6,456.8 372.1,455.1 372.5,453.0 372.9,450.3 373.3,447.1 373.7,443.6 374.1,439.8 374.6,435.9 375.0,432.0 375.5,428.0 375.9,423.7 376.4,419.4 376.9,415.0 377.4,410.9 378.0,407.0 378.7,403.4 379.5,399.8 380.3,396.5 381.2,393.3 382.0,390.5 382.7,388.0 383.3,385.9 383.9,384.2 384.4,382.7 384.9,381.5 385.4,380.5 386.0,379.5 386.6,378.6 387.3,377.9 388.0,377.3 388.6,376.9 389.3,376.7 390.0,376.6 390.7,376.7 391.3,377.1 392.0,377.6 392.6,378.2 393.3,379.0 394.0,380.0 394.7,381.2 395.5,382.8 396.3,384.5 397.1,386.2 397.9,387.7 398.6,389.0 399.3,390.0 399.9,390.9 400.6,391.6 401.2,392.1 401.6,392.6 402.0,393.0" stroke="#007a7a" stroke-width="2.4" fill="none" stroke-linejoin="round"/>
<polyline points="370.0,460.5 370.3,459.8 370.6,459.1 371.1,458.1 371.6,456.8 372.1,455.1 372.5,453.0 372.9,450.3 373.3,447.1 373.7,443.6 374.1,439.8 374.6,435.9 375.0,432.0 375.5,428.0 375.9,423.7 376.4,419.4 376.9,415.0 377.4,410.9 378.0,407.0 378.7,403.4 379.5,399.8 380.3,396.5 381.2,393.3 382.0,390.5 382.7,388.0 383.3,385.9 383.9,384.2 384.4,382.7 384.9,381.5 385.4,380.5 386.0,379.5 386.6,378.6 387.3,377.9 388.0,377.3 388.6,376.9 389.3,376.7 390.0,376.6 390.7,376.7 391.3,377.1 392.0,377.6 392.6,378.2 393.3,379.0 394.0,380.0 394.7,381.2 395.5,382.8 396.3,384.5 397.1,386.2 397.9,387.7 398.6,389.0 399.3,390.0 399.9,390.9 400.6,391.6 401.2,392.1 401.6,392.6 402.0,393.0" stroke="#00f4f4" stroke-width="1.5" fill="none" stroke-linejoin="round"/>
<polyline points="459.0,69.1 459.3,68.5 459.7,68.3 460.1,68.5" stroke="#007a7a" stroke-width="4.2" fill="none" stroke-linejoin="round" stroke-linecap="round"/>
<polyline points="459.0,69.1 459.3,68.5 459.7,68.3 460.1,68.5" stroke="#00f4f4" stroke-width="2.6" fill="none" stroke-linejoin="round" stroke-linecap="round"/>
<polyline points="478.2,159.8 479.1,161.0 479.9,161.8 480.6,162.0 481.2,161.7 481.8,161.0" stroke="#007a7a" stroke-width="4.2" fill="none" stroke-linejoin="round" stroke-linecap="round"/>
<polyline points="478.2,159.8 479.1,161.0 479.9,161.8 480.6,162.0 481.2,161.7 481.8,161.0" stroke="#00f4f4" stroke-width="2.6" fill="none" stroke-linejoin="round" stroke-linecap="round"/>
<polyline points="491.1,143.3 492.0,142.0 493.0,140.7 494.0,139.5 495.0,138.3 496.1,137.2 497.2,136.5 498.2,136.1 499.2,136.1 500.2,136.6 501.1,137.2 502.1,138.1 503.0,139.1 504.0,140.0 505.0,141.0 506.0,142.2 507.0,143.5 508.0,144.8 509.0,146.0 510.0,147.0 511.0,147.9 512.0,148.9 513.0,149.7 514.1,150.4 515.2,150.8 516.3,151.0 517.5,150.8 518.9,150.2 520.2,149.4 521.6,148.6 522.9,147.7 524.0,147.0 525.0,146.4 525.9,145.9 526.7,145.4 527.5,144.9 528.2,144.4 529.0,144.0 529.8,143.6 530.6,143.1 531.4,142.8 532.1,142.4 532.7,142.1 533.3,142.0 533.8,142.0 534.1,142.1 534.4,142.4 534.7,142.6 534.8,142.9 535.0,143.0" stroke="#007a7a" stroke-width="4.2" fill="none" stroke-linejoin="round" stroke-linecap="round"/>
<polyline points="491.1,143.3 492.0,142.0 493.0,140.7 494.0,139.5 495.0,138.3 496.1,137.2 497.2,136.5 498.2,136.1 499.2,136.1 500.2,136.6 501.1,137.2 502.1,138.1 503.0,139.1 504.0,140.0 505.0,141.0 506.0,142.2 507.0,143.5 508.0,144.8 509.0,146.0 510.0,147.0 511.0,147.9 512.0,148.9 513.0,149.7 514.1,150.4 515.2,150.8 516.3,151.0 517.5,150.8 518.9,150.2 520.2,149.4 521.6,148.6 522.9,147.7 524.0,147.0 525.0,146.4 525.9,145.9 526.7,145.4 527.5,144.9 528.2,144.4 529.0,144.0 529.8,143.6 530.6,143.1 531.4,142.8 532.1,142.4 532.7,142.1 533.3,142.0 533.8,142.0 534.1,142.1 534.4,142.4 534.7,142.6 534.8,142.9 535.0,143.0" stroke="#00f4f4" stroke-width="2.6" fill="none" stroke-linejoin="round" stroke-linecap="round"/>
<polyline points="449.6,170.0 449.8,166.7 450.0,162.0 450.3,156.6 450.6,150.7 450.9,145.1 451.2,140.0 451.5,135.6 451.9,131.4 452.2,127.3 452.6,123.3 452.9,119.3 453.3,115.0 453.7,110.4 454.1,105.5 454.5,100.5 454.9,95.7 455.2,91.3 455.6,87.5 455.9,84.3 456.3,81.7 456.6,79.4 456.9,77.4 457.2,75.6 457.5,74.0 457.9,72.5 458.2,71.1 458.6,69.9 459.0,69.1 459.3,68.5 459.7,68.3 460.1,68.5 460.4,69.1 460.8,69.9 461.1,71.1 461.5,72.5 461.8,74.0 462.1,75.6 462.5,77.4 462.8,79.4 463.1,81.7 463.5,84.3 463.9,87.5 464.3,91.4 464.8,96.0 465.2,100.9 465.7,106.0 466.2,110.8 466.7,115.0 467.2,118.6 467.7,121.8 468.1,124.8 468.6,127.6 469.2,130.4 469.8,133.4 470.5,136.6 471.2,139.8 472.0,143.1 472.7,146.2 473.6,149.1 474.4,151.7 475.3,154.0 476.2,156.2 477.2,158.1 478.2,159.8 479.1,161.0 479.9,161.8 480.6,162.0 481.2,161.7 481.8,161.0 482.4,160.0 482.9,159.0 483.5,158.0 484.1,157.0 484.7,155.9 485.3,154.7 485.9,153.4 486.5,152.1 487.2,150.8 487.9,149.4 488.7,147.9 489.4,146.3 490.3,144.8 491.1,143.3 492.0,142.0 493.0,140.7 494.0,139.5 495.0,138.3 496.1,137.2 497.2,136.5 498.2,136.1 499.2,136.1 500.2,136.6 501.1,137.2 502.1,138.1 503.0,139.1 504.0,140.0 505.0,141.0 506.0,142.2 507.0,143.5 508.0,144.8 509.0,146.0 510.0,147.0 511.0,147.9 512.0,148.9 513.0,149.7 514.1,150.4 515.2,150.8 516.3,151.0 517.5,150.8 518.9,150.2 520.2,149.4 521.6,148.6 522.9,147.7 524.0,147.0 525.0,146.4 525.9,145.9 526.7,145.4 527.5,144.9 528.2,144.4 529.0,144.0 529.8,143.6 530.6,143.1 531.4,142.8 532.1,142.4 532.7,142.1 533.3,142.0 533.8,142.0 534.1,142.1 534.4,142.4 534.7,142.6 534.8,142.9 535.0,143.0" stroke="#007a7a" stroke-width="2.4" fill="none" stroke-linejoin="round"/>
<polyline points="449.6,170.0 449.8,166.7 450.0,162.0 450.3,156.6 450.6,150.7 450.9,145.1 451.2,140.0 451.5,135.6 451.9,131.4 452.2,127.3 452.6,123.3 452.9,119.3 453.3,115.0 453.7,110.4 454.1,105.5 454.5,100.5 454.9,95.7 455.2,91.3 455.6,87.5 455.9,84.3 456.3,81.7 456.6,79.4 456.9,77.4 457.2,75.6 457.5,74.0 457.9,72.5 458.2,71.1 458.6,69.9 459.0,69.1 459.3,68.5 459.7,68.3 460.1,68.5 460.4,69.1 460.8,69.9 461.1,71.1 461.5,72.5 461.8,74.0 462.1,75.6 462.5,77.4 462.8,79.4 463.1,81.7 463.5,84.3 463.9,87.5 464.3,91.4 464.8,96.0 465.2,100.9 465.7,106.0 466.2,110.8 466.7,115.0 467.2,118.6 467.7,121.8 468.1,124.8 468.6,127.6 469.2,130.4 469.8,133.4 470.5,136.6 471.2,139.8 472.0,143.1 472.7,146.2 473.6,149.1 474.4,151.7 475.3,154.0 476.2,156.2 477.2,158.1 478.2,159.8 479.1,161.0 479.9,161.8 480.6,162.0 481.2,161.7 481.8,161.0 482.4,160.0 482.9,159.0 483.5,158.0 484.1,157.0 484.7,155.9 485.3,154.7 485.9,153.4 486.5,152.1 487.2,150.8 487.9,149.4 488.7,147.9 489.4,146.3 490.3,144.8 491.1,143.3 492.0,142.0 493.0,140.7 494.0,139.5 495.0,138.3 496.1,137.2 497.2,136.5 498.2,136.1 499.2,136.1 500.2,136.6 501.1,137.2 502.1,138.1 503.0,139.1 504.0,140.0 505.0,141.0 506.0,142.2 507.0,143.5 508.0,144.8 509.0,146.0 510.0,147.0 511.0,147.9 512.0,148.9 513.0,149.7 514.1,150.4 515.2,150.8 516.3,151.0 517.5,150.8 518.9,150.2 520.2,149.4 521.6,148.6 522.9,147.7 524.0,147.0 525.0,146.4 525.9,145.9 526.7,145.4 527.5,144.9 528.2,144.4 529.0,144.0 529.8,143.6 530.6,143.1 531.4,142.8 532.1,142.4 532.7,142.1 533.3,142.0 533.8,142.0 534.1,142.1 534.4,142.4 534.7,142.6 534.8,142.9 535.0,143.0" stroke="#00f4f4" stroke-width="1.5" fill="none" stroke-linejoin="round"/>
<polyline points="556.4,460.3 556.9,460.9 557.4,461.1 557.9,460.6" stroke="#007a7a" stroke-width="4.2" fill="none" stroke-linejoin="round" stroke-linecap="round"/>
<polyline points="556.4,460.3 556.9,460.9 557.4,461.1 557.9,460.6" stroke="#00f4f4" stroke-width="2.6" fill="none" stroke-linejoin="round" stroke-linecap="round"/>
<polyline points="574.5,379.3 575.6,377.6 576.6,376.4 577.5,375.9 578.2,376.1 579.0,376.7 579.6,377.6 580.3,378.6 581.0,379.5 581.7,380.5 582.5,381.7" stroke="#007a7a" stroke-width="4.2" fill="none" stroke-linejoin="round" stroke-linecap="round"/>
<polyline points="574.5,379.3 575.6,377.6 576.6,376.4 577.5,375.9 578.2,376.1 579.0,376.7 579.6,377.6 580.3,378.6 581.0,379.5 581.7,380.5 582.5,381.7" stroke="#00f4f4" stroke-width="2.6" fill="none" stroke-linejoin="round" stroke-linecap="round"/>
<polyline points="549.9,420.0 550.2,422.8 550.5,426.8 551.0,431.5 551.4,436.5 552.0,441.1 552.5,445.0 553.1,448.4 553.7,451.6 554.4,454.6 555.1,457.2 555.8,459.1 556.4,460.3 556.9,460.9 557.4,461.1 557.9,460.6 558.3,459.4 558.9,457.3 559.5,454.0 560.2,449.1 561.1,442.5 562.0,434.9 562.9,427.2 563.8,419.8 564.7,413.7 565.6,408.7 566.4,404.2 567.3,400.2 568.1,396.5 569.0,393.2 570.0,390.0 571.1,387.0 572.2,384.1 573.4,381.5 574.5,379.3 575.6,377.6 576.6,376.4 577.5,375.9 578.2,376.1 579.0,376.7 579.6,377.6 580.3,378.6 581.0,379.5 581.7,380.5 582.5,381.7 583.3,382.9 584.0,384.2 584.6,385.3 585.0,386.0" stroke="#007a7a" stroke-width="2.4" fill="none" stroke-linejoin="round"/>
<polyline points="549.9,420.0 550.2,422.8 550.5,426.8 551.0,431.5 551.4,436.5 552.0,441.1 552.5,445.0 553.1,448.4 553.7,451.6 554.4,454.6 555.1,457.2 555.8,459.1 556.4,460.3 556.9,460.9 557.4,461.1 557.9,460.6 558.3,459.4 558.9,457.3 559.5,454.0 560.2,449.1 561.1,442.5 562.0,434.9 562.9,427.2 563.8,419.8 564.7,413.7 565.6,408.7 566.4,404.2 567.3,400.2 568.1,396.5 569.0,393.2 570.0,390.0 571.1,387.0 572.2,384.1 573.4,381.5 574.5,379.3 575.6,377.6 576.6,376.4 577.5,375.9 578.2,376.1 579.0,376.7 579.6,377.6 580.3,378.6 581.0,379.5 581.7,380.5 582.5,381.7 583.3,382.9 584.0,384.2 584.6,385.3 585.0,386.0" stroke="#00f4f4" stroke-width="1.5" fill="none" stroke-linejoin="round"/>
<path d="M44.5,146 v2.4 M307.5,142 v-1.7 M126.5,142 v-2.4 M326.5,142 v-2.1 M249.5,146 v1.7 M187.5,146 v2.9 M224.5,146 v1.9 M107.5,146 v2.6 M68.5,142 v-1.9 M261.5,146 v1.8 M235.5,146 v1.6 M55.5,146 v1.7 M102.5,142 v-2.8 M129.5,142 v-2.7 M258.5,142 v-1.6 M330.5,142 v-2.5 M63.5,146 v3.0 M288.5,146 v1.7 M139.5,142 v-1.9 M222.5,142 v-2.0 M69.5,146 v2.7 M283.5,146 v2.2 M191.5,146 v2.4 M262.5,142 v-2.1 M36.5,142 v-1.8 M310.5,146 v2.2 M26.5,146 v2.2 M224.5,142 v-2.1 M57.5,142 v-1.7 M145.5,146 v2.1 M74.5,142 v-1.9 M77.5,142 v-1.9 M180.5,146 v1.5 M144.5,146 v2.9 M241.5,146 v2.2 M63.5,142 v-2.5 M241.5,142 v-2.6 M90.5,142 v-1.5 M51.5,146 v2.1 M142.5,142 v-2.0 M116.5,146 v2.6 M78.5,146 v1.9 M326.5,142 v-2.5 M338.5,142 v-1.5 M275.5,142 v-2.1 M201.5,146 v3.0 M138.5,142 v-1.6 M313.5,146 v2.2 M43.5,142 v-1.9 M153.5,142 v-1.6 M156.5,142 v-2.0 M38.5,142 v-3.0 M188.5,146 v2.1 M52.5,142 v-2.0 M199.5,146 v2.9 M300.5,142 v-1.8 M198.5,146 v2.2 M146.5,146 v2.4 M318.5,142 v-2.0 M290.5,142 v-1.8" stroke="#00c8c8" stroke-width="1" fill="none"/>
<path d="M648.5,393.5 v1.6 M739.5,389.5 v-2.0 M606.5,389.5 v-1.9 M669.5,389.5 v-2.4 M603.5,389.5 v-2.6 M627.5,389.5 v-1.9 M609.5,389.5 v-2.1 M727.5,393.5 v2.3 M709.5,393.5 v2.6 M671.5,393.5 v2.7 M763.5,393.5 v2.6 M640.5,389.5 v-2.7 M615.5,389.5 v-1.6 M639.5,389.5 v-2.5 M603.5,393.5 v2.6 M596.5,389.5 v-1.6 M656.5,393.5 v2.8 M702.5,389.5 v-1.8 M657.5,389.5 v-2.0 M697.5,393.5 v2.7 M609.5,389.5 v-2.3 M719.5,393.5 v2.2 M735.5,389.5 v-1.7 M756.5,389.5 v-2.2 M671.5,393.5 v2.7 M687.5,393.5 v3.0 M610.5,389.5 v-2.7 M601.5,389.5 v-3.0 M695.5,393.5 v2.2 M662.5,389.5 v-1.8 M628.5,389.5 v-2.3 M727.5,389.5 v-1.9 M636.5,393.5 v3.0 M744.5,389.5 v-2.4 M617.5,389.5 v-2.7 M598.5,389.5 v-1.8 M721.5,389.5 v-2.9 M735.5,393.5 v2.0 M747.5,393.5 v2.4 M659.5,393.5 v1.5" stroke="#00c8c8" stroke-width="1" fill="none"/>
<path d="M422.5,392 v-1.8 M414.5,392 v-1.5 M416.5,396 v2.2 M416.5,396 v3.0 M433.5,396 v2.5 M421.5,392 v-2.7 M422.5,396 v2.5 M413.5,392 v-1.6" stroke="#00c8c8" stroke-width="1" fill="none"/>
<path d="M24,10.3 L25.3,9 H35.3 V11.6 H26.6 V19.2 H32.7 V16.9 H30.5 V14.3 H35.3 V20.5 L34,21.8 H25.3 L24,20.5 Z M36.9,9 H39.5 V15.2 H41.8 V9.8 H44.4 V15.2 H47.1 V9 H49.7 V16.5 L48.6,17.7 H38 L36.9,16.5 Z M53,9 H55.6 V21.8 H53 Z M56.8,21.8 V9 H66.6 L68.3,10.7 V21.8 H65.7 V11.6 H59.4 V21.8 Z M70.9,9 H79.3 V11.6 H72.2 V14.2 H78 L79.3,15.5 V20.5 L78,21.8 H69.6 V19.2 H76.7 V16.8 H70.9 L69.6,15.5 V10.3 Z M79.8,9 H90 V11.6 H86.2 V21.8 H83.6 V11.6 H79.8 Z M92.5,9 H101 V11.6 H93.8 V14.2 H100 V16.8 H93.8 V19.2 H101 V21.8 H92.5 L91.2,20.5 V10.3 Z M101.9,9 H104.5 V14.2 H106 L110.5,9 H113.6 L107.8,15.4 L113.8,21.8 H110.6 L106,16.8 H104.5 V21.8 H101.9 Z" fill="#fff"/>
<rect x="36.9" y="19" width="12.8" height="2.8" fill="#e87400"/>
<rect x="249.5" y="7.5" width="299" height="25" fill="#000" stroke="#fff" stroke-width="1"/>
<polyline points="299.0,17.62 300.0,17.97 301.0,18.53 302.0,19.25 303.0,20.09 304.0,21.00 305.0,21.91 306.0,22.75 307.0,23.47 308.0,24.03 309.0,24.38 310.0,24.50 311.0,24.38 312.0,24.03 313.0,23.47 314.0,22.75 315.0,21.91 316.0,21.00 317.0,20.09 318.0,19.25 319.0,18.53 320.0,17.97 321.0,17.62 322.0,17.50 323.0,17.62 324.0,17.97 325.0,18.53 326.0,19.25 327.0,20.09 328.0,21.00 329.0,21.91 330.0,22.75 331.0,23.47 332.0,24.03 333.0,24.38 334.0,24.50 335.0,24.38 336.0,24.03 337.0,23.47 338.0,22.75 339.0,21.91 340.0,21.00 341.0,20.09 342.0,19.25 343.0,18.53 344.0,17.97 345.0,17.62 346.0,17.50 347.0,17.62 348.0,17.97 349.0,18.53 350.0,19.25 351.0,20.09 352.0,21.00 353.0,21.91 354.0,22.75 355.0,23.47 356.0,24.03 357.0,24.38 358.0,24.50 359.0,24.38 360.0,24.03 361.0,23.47 362.0,22.75 363.0,21.91 364.0,21.00 365.0,20.09 366.0,19.25 367.0,18.53 368.0,17.97 369.0,17.62 370.0,17.50 371.0,17.62 372.0,17.97 373.0,18.53 374.0,19.25 375.0,20.09 376.0,21.00 377.0,21.91 378.0,22.75 379.0,23.47 380.0,24.03 381.0,24.38 382.0,24.50 383.0,24.38 384.0,24.03 385.0,23.47 386.0,22.75 387.0,21.91 388.0,21.00 389.0,20.09 390.0,19.25 391.0,18.53 392.0,17.97 393.0,17.62 394.0,17.50 395.0,17.62 396.0,17.97 397.0,18.53 398.0,19.25 399.0,20.09 400.0,21.00 401.0,21.91 402.0,22.75 403.0,23.47 404.0,24.03 405.0,24.38 406.0,24.50 407.0,24.38 408.0,24.03 409.0,23.47 410.0,22.75 411.0,21.91 412.0,21.00 413.0,20.09 414.0,19.25 415.0,18.53 416.0,17.97 417.0,17.62 418.0,17.50 419.0,17.62 420.0,17.97 421.0,18.53 422.0,19.25 423.0,20.09 424.0,21.00 425.0,21.91 426.0,22.75 427.0,23.47 428.0,24.03 429.0,24.38 430.0,24.50 431.0,24.38 432.0,24.03 433.0,23.47 434.0,22.75 435.0,21.91 436.0,21.00 437.0,20.09 438.0,19.25 439.0,18.53 440.0,17.97 441.0,17.62 442.0,17.50 443.0,17.62 444.0,17.97 445.0,18.53 446.0,19.25 447.0,20.09 448.0,21.00 449.0,21.91 450.0,22.75 451.0,23.47 452.0,24.03 453.0,24.38 454.0,24.50 455.0,24.38 456.0,24.03 457.0,23.47 458.0,22.75 459.0,21.91 460.0,21.00 461.0,20.09 462.0,19.25 463.0,18.53 464.0,17.97 465.0,17.62 466.0,17.50 467.0,17.62 468.0,17.97 469.0,18.53 470.0,19.25 471.0,20.09 472.0,21.00 473.0,21.91 474.0,22.75 475.0,23.47 476.0,24.03 477.0,24.38 478.0,24.50 479.0,24.38 480.0,24.03 481.0,23.47 482.0,22.75 483.0,21.91 484.0,21.00 485.0,20.09 486.0,19.25 487.0,18.53 488.0,17.97 489.0,17.62 490.0,17.50 491.0,17.62 492.0,17.97 493.0,18.53 494.0,19.25 495.0,20.09 496.0,21.00 497.0,21.91 498.0,22.75 499.0,23.47" fill="none" stroke="#f0c000" stroke-width="1.3"/>
<rect x="380" y="11" width="38" height="17.8" fill="none" stroke="#e0700a" stroke-width="2"/>
<path d="M394,8 H399 V10.5 L396.5,14 L394,10.5 Z" fill="#00f0f0"/>
<rect x="558.5" y="7.5" width="49" height="25" rx="4" fill="none" stroke="#ff0a0a" stroke-width="1"/>
<text transform="translate(566,23.8) scale(0.96,1)" x="0" y="0" font-weight="bold" font-size="15.2" fill="#ff0a0a" style="font-family:'Liberation Sans'">Stop</text>
<rect x="617.5" y="7.5" width="37" height="25" rx="4" fill="none" stroke="#66ee99" stroke-width="1"/>
<path d="M624,24.8h5v2h-5z M627,14h2v12.8h-2z M642,14h2v12.8h-2z M642,24.8h5v2h-5z M627,14h17v2h-17z M628,13h2v1h-2z M632,13h2v1h-2z M636,13h2v1h-2z M640,13h2v1h-2z M630,16h2v1h-2z M634,16h2v1h-2z M638,16h2v1h-2z" fill="#66ee99"/>
<rect x="669.5" y="2.5" width="105" height="35" rx="5" fill="#000" stroke="#fff" stroke-width="1"/>
<text x="677" y="15.5" font-size="14.5" letter-spacing="-0.62" fill="#fff">26 Sep 2020</text>
<text x="697.5" y="31.5" font-size="14.5" letter-spacing="-0.62" fill="#fff">15</text>
<text x="715.5" y="31.5" font-size="14.5" letter-spacing="-0.62" fill="#fff">:</text>
<text x="723.5" y="31.5" font-size="14.5" letter-spacing="-0.62" fill="#fff">46</text>
<text x="741.5" y="31.5" font-size="14.5" letter-spacing="-0.62" fill="#fff">:</text>
<text x="749.5" y="31.5" font-size="14.5" letter-spacing="-0.62" fill="#fff">14</text>
<path d="M161.5,40 H175.5 L168.5,47 Z" fill="#ffcc00"/>
<path d="M392.5,40.5 L399.5,47.5 L406.5,40.5" fill="none" stroke="#ffcc00" stroke-width="1.1"/>
<path d="M774,323 V336 L767,329.5 Z" fill="#ffcc00"/>
<path d="M3.5,390.5 H18.5 L22.5,396.5 L18.5,402.5 H3.5 Z" fill="#00ffff" stroke="#000" stroke-width="1"/>
<text x="8.5" y="401" font-size="12" fill="#000">2</text>
<rect x="643.5" y="498.5" width="129" height="19" rx="4" fill="#000" stroke="#fff" stroke-width="1"/>
<rect x="645" y="500" width="23" height="15" rx="6" fill="#fff"/>
<path d="M652.8,502 H661 V504 H654.8 V507 H660 V509 H654.8 V514 H652.8 Z" fill="#000"/>
<text x="680" y="512" font-size="14.5" letter-spacing="-0.62" fill="#fff">3.19608kHz</text>
<rect x="1.5" y="521.5" width="419" height="19" rx="4" fill="#000" stroke="#fff" stroke-width="1"/>
<ellipse cx="10" cy="531.5" rx="7" ry="7.5" fill="#ffcc00"/>
<path d="M8.8,526.3 H11.2 V538.0 H8.8 V529.3 H6.9 V527.9 Z" fill="#000"/>
<path d="M30,528h14v2h-14z M30,531h4v2h-4z M35,531h4v2h-4z M40,531h4v2h-4z" fill="#ffcc00"/>
<text x="66" y="535" font-size="14.5" letter-spacing="-0.62" fill="#ffcc00">1V</text>
<ellipse cx="117.2" cy="531.5" rx="7" ry="7.5" fill="#00ffff"/>
<text x="117.3" y="537.1" text-anchor="middle" font-size="15.5" style="font-family:'Liberation Sans'" fill="#000">2</text>
<path d="M137,528h14v2h-14z M137,531h4v2h-4z M142,531h4v2h-4z M147,531h4v2h-4z" fill="#00ffff"/>
<text x="173" y="535" font-size="14.5" letter-spacing="-0.62" fill="#00ffff">1V</text>
<ellipse cx="224" cy="531.5" rx="7" ry="7.5" fill="#404040"/>
<text x="224.1" y="537.1" text-anchor="middle" font-size="15.5" style="font-family:'Liberation Sans'" fill="#000">3</text>
<path d="M244,528h14v2h-14z M244,531h4v2h-4z M249,531h4v2h-4z M254,531h4v2h-4z" fill="#404040"/>
<text x="268" y="535" font-size="14.5" letter-spacing="-0.62" fill="#4a4a4a">100mV</text>
<ellipse cx="331" cy="531.5" rx="7" ry="7.5" fill="#404040"/>
<text x="331.1" y="537.1" text-anchor="middle" font-size="15.5" style="font-family:'Liberation Sans'" fill="#000">4</text>
<path d="M351,528h14v2h-14z M351,531h4v2h-4z M356,531h4v2h-4z M361,531h4v2h-4z" fill="#404040"/>
<text x="375" y="535" font-size="14.5" letter-spacing="-0.62" fill="#4a4a4a">100mV</text>
<rect x="425.5" y="521.5" width="167" height="19" rx="4" fill="#000" stroke="#fff" stroke-width="1"/>
<text x="449" y="535" font-size="14.5" letter-spacing="-0.62" fill="#fff">200ns</text>
<path d="M501,524 H511 L513,526 V536 L511,538 H501 L499,536 V526 Z" fill="#fff"/>
<path d="M501,526h2v11h-2z M509,526h2v11h-2z M503,530h6v2h-6z" fill="#000"/>
<text x="527" y="535" font-size="14.5" letter-spacing="-0.62" fill="#fff">618.0ns</text>
<rect x="599.5" y="521.5" width="175" height="37.5" rx="4" fill="#000" stroke="#fff" stroke-width="1"/>
<ellipse cx="629" cy="531.5" rx="7" ry="7.5" fill="#ffcc00"/>
<path d="M627.8,526.3 H630.2 V538.0 H627.8 V529.3 H625.9 V527.9 Z" fill="#000"/>
<path d="M654,537.5 H659 V525.5 H663 M655,531.8 L659,528 L663,531.8" fill="none" stroke="#ffcc00" stroke-width="1.3"/>
<text x="681" y="535" font-size="14.5" letter-spacing="-0.62" fill="#ffcc00">1.12V</text>
<text x="756" y="535" font-size="14.5" letter-spacing="-0.62" fill="#ffcc00">DC</text>
<rect x="26.5" y="561.5" width="746" height="45" rx="4" fill="#000" stroke="#fff" stroke-width="1"/>
<ellipse cx="36" cy="571.3" rx="7" ry="7.5" fill="#ffcc00"/>
<path d="M34.8,566.1 H37.2 V577.8 H34.8 V569.1 H32.9 V567.7 Z" fill="#000"/>
<text x="43.5" y="575.0999999999999" font-size="14.5" letter-spacing="-0.62" fill="#ffcc00">Frequency 4.002MHz</text>
<ellipse cx="222.3" cy="571.3" rx="7" ry="7.5" fill="#ffcc00"/>
<path d="M221.1,566.1 H223.5 V577.8 H221.1 V569.1 H219.2 V567.7 Z" fill="#000"/>
<text x="229.8" y="575.0999999999999" font-size="14.5" letter-spacing="-0.62" fill="#ffcc00">RiseTime 4.254ns</text>
<ellipse cx="408.1" cy="571.3" rx="7" ry="7.5" fill="#ffcc00"/>
<path d="M406.9,566.1 H409.3 V577.8 H406.9 V569.1 H405.0 V567.7 Z" fill="#000"/>
<text x="415.6" y="575.0999999999999" font-size="14.5" letter-spacing="-0.62" fill="#ffcc00">FallTime 4.245ns</text>
<ellipse cx="594.2" cy="571.3" rx="7" ry="7.5" fill="#00ffff"/>
<text x="594.3000000000001" y="576.9" text-anchor="middle" font-size="15.5" style="font-family:'Liberation Sans'" fill="#000">2</text>
<text x="601.7" y="575.0999999999999" font-size="14.5" letter-spacing="-0.62" fill="#00ffff">Frequency 2.006MHz</text>
<ellipse cx="36" cy="589.3" rx="7" ry="7.5" fill="#00ffff"/>
<text x="36.1" y="594.9" text-anchor="middle" font-size="15.5" style="font-family:'Liberation Sans'" fill="#000">2</text>
<text x="43.5" y="593.0999999999999" font-size="14.5" letter-spacing="-0.62" fill="#00ffff">RiseTime 27.76ns</text>
<ellipse cx="222.3" cy="589.3" rx="7" ry="7.5" fill="#00ffff"/>
<text x="222.4" y="594.9" text-anchor="middle" font-size="15.5" style="font-family:'Liberation Sans'" fill="#000">2</text>
<text x="229.8" y="593.0999999999999" font-size="14.5" letter-spacing="-0.62" fill="#00ffff">FallTime 27.76ns</text>
</svg></body></html>
